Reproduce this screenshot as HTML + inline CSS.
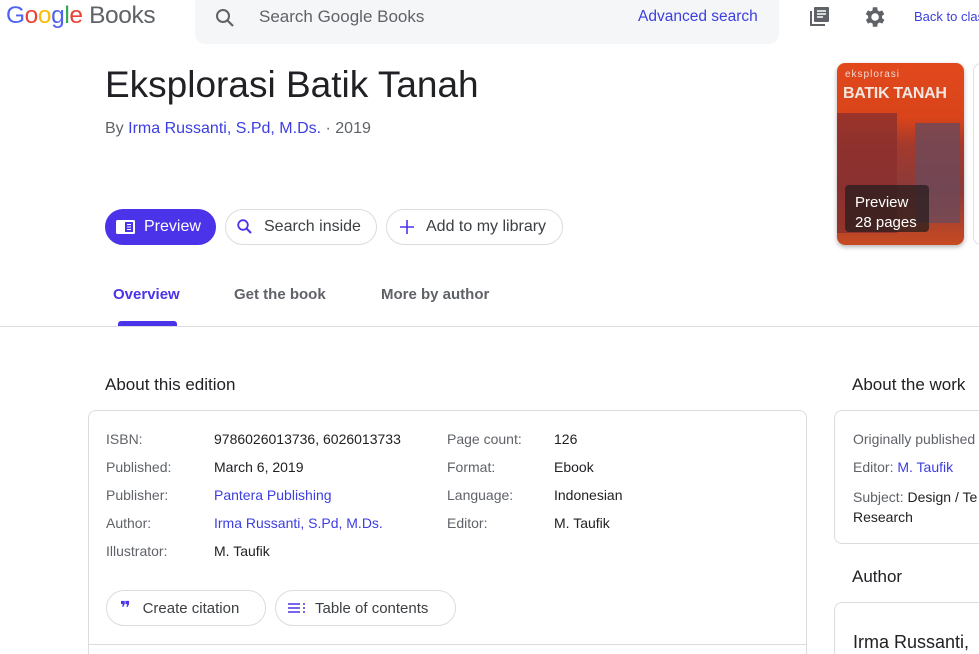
<!DOCTYPE html>
<html><head><meta charset="utf-8"><style>
*{margin:0;padding:0;box-sizing:border-box}
html,body{width:979px;height:654px;overflow:hidden}
body{background:#fff;font-family:"Liberation Sans",Arial,sans-serif;color:#202124;position:relative}
.a{position:absolute;white-space:nowrap}
.lk{color:#3c3ee0}
.btn{position:absolute;height:36px;border:1px solid #dadce0;border-radius:18px;font-size:16px;color:#3c4043;display:flex;align-items:center}
.lbl{color:#5f6368;font-size:14px}
.val{font-size:14px;color:#202124}
</style></head><body>
<div class="a" style="left:6px;top:2px;font-size:24.5px;letter-spacing:-0.4px"><span style="color:#4f63f0">G</span><span style="color:#ea4335">o</span><span style="color:#fbbc05">o</span><span style="color:#4f63f0">g</span><span style="color:#34a853">l</span><span style="color:#ea4335">e</span> <span style="color:#5f6368">Books</span></div>
<div class="a" style="left:195px;top:-10px;width:584px;height:54px;background:#f5f6f8;border-radius:10px"></div>
<svg class="a" style="left:213px;top:6px" width="24" height="24" viewBox="0 0 24 24"><circle cx="10" cy="10" r="6" fill="none" stroke="#5f6368" stroke-width="2"/><path d="M14.5 14.5 L20 20" stroke="#5f6368" stroke-width="2.2"/></svg>
<div class="a" style="left:259px;top:7px;font-size:17px;color:#5f6368">Search Google Books</div>
<div class="a lk" style="left:638px;top:8px;font-size:15.5px">Advanced search</div>
<svg class="a" style="left:807px;top:5px" width="24" height="24" viewBox="0 0 24 24"><path d="M3 6v15h15v-2H5V6z" fill="#5f6368"/><rect x="7" y="2" width="15" height="15" rx="1" fill="#5f6368"/><path d="M10 6h9M10 9h9M10 12h6" stroke="#fff" stroke-width="1.5"/></svg>
<svg class="a" style="left:861px;top:4px" width="26" height="26" viewBox="0 0 24 24"><path fill="#5f6368" d="M19.4 13a7.5 7.5 0 0 0 0-2l2.1-1.6-2-3.5-2.5 1a7 7 0 0 0-1.7-1L15 3h-4l-.4 2.9a7 7 0 0 0-1.7 1l-2.5-1-2 3.5L6.6 11a7.5 7.5 0 0 0 0 2l-2.1 1.6 2 3.5 2.5-1a7 7 0 0 0 1.7 1L11 21h4l.4-2.9a7 7 0 0 0 1.7-1l2.5 1 2-3.5zM13 15.5a3.5 3.5 0 1 1 0-7 3.5 3.5 0 0 1 0 7z"/></svg>
<div class="a lk" style="left:914px;top:9px;font-size:13px">Back to classic</div>

<div class="a" style="left:105px;top:64px;font-size:37px;color:#202124">Eksplorasi Batik Tanah</div>
<div class="a" style="left:105px;top:120px;font-size:16px;color:#5f6368">By <span class="lk">Irma Russanti, S.Pd, M.Ds.</span> · 2019</div>

<div class="btn" style="left:105px;top:209px;width:111px;background:#4a33e8;border-color:#4a33e8;color:#fff;padding-left:10px">
<svg width="20" height="16" viewBox="0 0 20 16"><rect x="0" y="1" width="19" height="14" rx="1.5" fill="#fff"/><rect x="9" y="3" width="8" height="10" fill="#4a33e8"/><path d="M11 5.5h4M11 8h4M11 10.5h4" stroke="#fff" stroke-width="1"/></svg>
<span style="margin-left:8px">Preview</span></div>
<div class="btn" style="left:225px;top:209px;width:152px;padding-left:10px">
<svg width="18" height="18" viewBox="0 0 18 18"><circle cx="7" cy="7" r="4.8" fill="none" stroke="#4a33e8" stroke-width="1.8"/><path d="M10.5 10.5 15 15" stroke="#4a33e8" stroke-width="2"/></svg>
<span style="margin-left:10px">Search inside</span></div>
<div class="btn" style="left:386px;top:209px;width:177px;padding-left:12px">
<svg width="16" height="16"><path d="M8 1v14M1 8h14" stroke="#4a33e8" stroke-width="1.6"/></svg>
<span style="margin-left:11px">Add to my library</span></div>

<div class="a" style="left:837px;top:63px;width:127px;height:182px;border-radius:8px;overflow:hidden;background:linear-gradient(180deg,#e2481c 0%,#d9441a 30%,#a43a2d 45%,#8a3a3a 70%,#c84a22 100%);box-shadow:0 2px 5px rgba(0,0,0,.3)">
<div class="a" style="left:8px;top:6px;font-size:10px;color:#f0d8d0;letter-spacing:1px">eksplorasi</div>
<div class="a" style="left:6px;top:22px;font-size:16px;font-weight:bold;color:#f3e6e0;letter-spacing:-0.3px">BATIK TANAH</div>
<div class="a" style="left:0;top:50px;width:60px;height:120px;background:#8a2f2e;opacity:.8"></div>
<div class="a" style="left:78px;top:60px;width:45px;height:100px;background:#6d4a5a;opacity:.8"></div>
<div class="a" style="left:8px;top:122px;width:84px;height:47px;background:rgba(40,30,30,.75);border-radius:4px"></div>
<div class="a" style="left:18px;top:130px;font-size:15px;color:#fff;line-height:20px">Preview<br>28 pages</div>
</div>
<div class="a" style="left:973px;top:63px;width:20px;height:182px;border:1px solid #e0e0e0;border-radius:8px"></div>

<div class="a" style="left:113px;top:286px;font-size:15px;font-weight:bold;color:#4a33e8">Overview</div>
<div class="a" style="left:234px;top:286px;font-size:15px;font-weight:bold;color:#5f6368">Get the book</div>
<div class="a" style="left:381px;top:286px;font-size:15px;font-weight:bold;color:#5f6368">More by author</div>
<div class="a" style="left:118px;top:321px;width:59px;height:5px;background:#4a33e8;border-radius:3px 3px 0 0"></div>
<div class="a" style="left:0;top:326px;width:979px;height:1px;background:#dadce0"></div>

<div class="a" style="left:105px;top:375px;font-size:17px">About this edition</div>
<div class="a" style="left:88px;top:410px;width:719px;height:260px;border:1px solid #dadce0;border-radius:8px"></div>
<div class="a lbl" style="left:106px;top:425px;line-height:28px">ISBN:<br>Published:<br>Publisher:<br>Author:<br>Illustrator:</div>
<div class="a val" style="left:214px;top:425px;line-height:28px">9786026013736, 6026013733<br>March 6, 2019<br><span class="lk">Pantera Publishing</span><br><span class="lk">Irma Russanti, S.Pd, M.Ds.</span><br>M. Taufik</div>
<div class="a lbl" style="left:447px;top:425px;line-height:28px">Page count:<br>Format:<br>Language:<br>Editor:</div>
<div class="a val" style="left:554px;top:425px;line-height:28px">126<br>Ebook<br>Indonesian<br>M. Taufik</div>
<div class="btn" style="left:106px;top:590px;width:160px;height:36px;font-size:15px;padding-left:13px"><span style="color:#4a33e8;font-weight:bold;font-size:18px;font-family:'DejaVu Sans';letter-spacing:-2px">❞</span><span style="margin-left:14px">Create citation</span></div>
<div class="btn" style="left:275px;top:590px;width:181px;height:36px;font-size:15px;padding-left:12px">
<svg width="18" height="12"><path d="M0 2h12M0 6h12M0 10h12M15 2h2M15 6h2M15 10h2" stroke="#4a33e8" stroke-width="1.6"/></svg><span style="margin-left:9px">Table of contents</span></div>
<div class="a" style="left:88px;top:644px;width:719px;height:1px;background:#dadce0"></div>

<div class="a" style="left:852px;top:375px;font-size:17px">About the work</div>
<div class="a" style="left:834px;top:410px;width:160px;height:134px;border:1px solid #dadce0;border-radius:8px"></div>
<div class="a lbl" style="left:853px;top:431px">Originally published</div>
<div class="a lbl" style="left:853px;top:459px">Editor: <span class="lk">M. Taufik</span></div>
<div class="a lbl" style="left:853px;top:487px;line-height:20px">Subject: <span style="color:#202124">Design / Te</span><br><span style="color:#202124">Research</span></div>
<div class="a" style="left:852px;top:567px;font-size:17px">Author</div>
<div class="a" style="left:834px;top:602px;width:160px;height:80px;border:1px solid #dadce0;border-radius:8px"></div>
<div class="a" style="left:853px;top:632px;font-size:18px">Irma Russanti,</div>
</body></html>
